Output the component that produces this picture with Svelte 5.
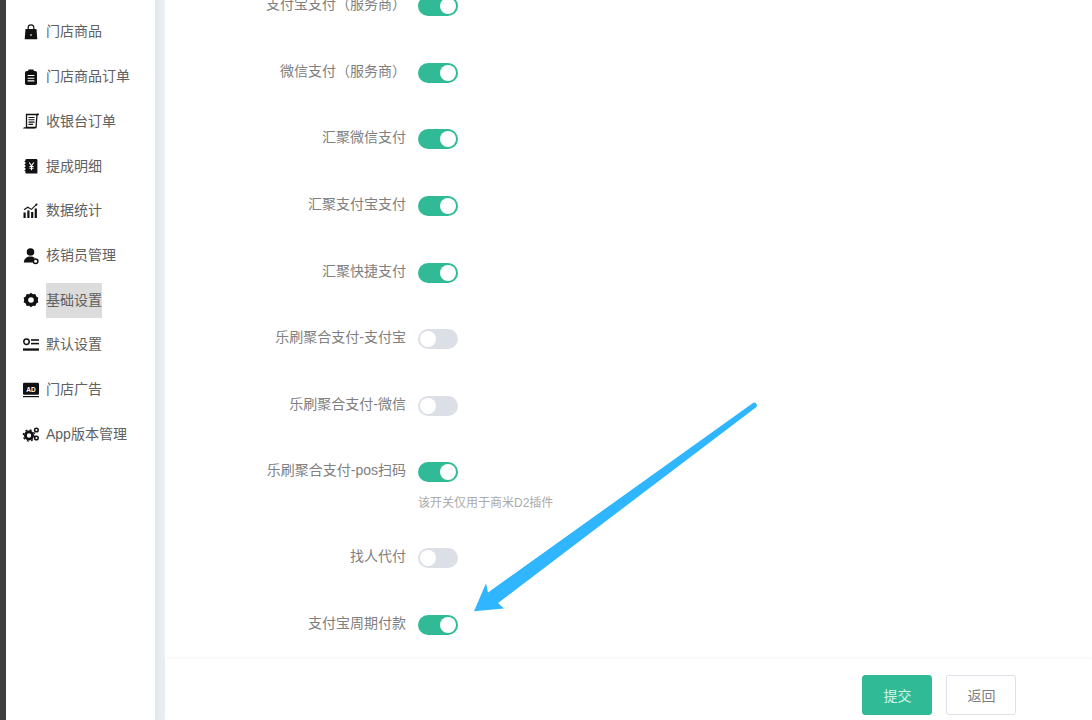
<script>
  const menu = [
    { name: '门店商品', icon: 'bag' },
    { name: '门店商品订单', icon: 'clip' },
    { name: '收银台订单', icon: 'scroll' },
    { name: '提成明细', icon: 'yen' },
    { name: '数据统计', icon: 'chart' },
    { name: '核销员管理', icon: 'user' },
    { name: '基础设置', icon: 'gear', active: true },
    { name: '默认设置', icon: 'list' },
    { name: '门店广告', icon: 'ad' },
    { name: 'App版本管理', icon: 'gears' }
  ];
  const rows = [
    { label: '支付宝支付（服务商）', on: true, wide: true },
    { label: '微信支付（服务商）', on: true, wide: true },
    { label: '汇聚微信支付', on: true },
    { label: '汇聚支付宝支付', on: true },
    { label: '汇聚快捷支付', on: true },
    { label: '乐刷聚合支付-支付宝', on: false },
    { label: '乐刷聚合支付-微信', on: false },
    { label: '乐刷聚合支付-pos扫码', on: true, hint: '该开关仅用于商米D2插件' },
    { label: '找人代付', on: false },
    { label: '支付宝周期付款', on: true }
  ];
</script>

<div class="page">
  <div class="rail"></div>
  <nav class="side">
    {#each menu as m}
      <div class="item">
        <svg class="ico" viewBox="0 0 18 18" width="18" height="18" fill="#111">
          {#if m.icon === 'bag'}
            <path d="M3.5 6h11l.8 10.2H2.7z" />
            <path d="M6.2 7V4.6a2.8 2.8 0 0 1 5.6 0V7" fill="none" stroke="#111" stroke-width="1.2" />
            <rect x="8" y="11.5" width="2" height="1" fill="#fff" />
          {:else if m.icon === 'clip'}
            <rect x="3" y="3" width="12" height="14" rx="1.8" />
            <rect x="6.3" y="1.5" width="5.4" height="3" rx=".8" />
            <path d="M5.6 7.5h6.8M5.6 10.2h6.8M5.6 12.9h6.8" stroke="#fff" stroke-width="1.1" />
          {:else if m.icon === 'scroll'}
            <path d="M4.5 2.5h10.5L14 15.5H4.5z" fill="none" stroke="#111" stroke-width="1.3" />
            <path d="M6.5 5.5h6M6.5 7.8h6M6.5 10.1h6M6.5 12.4h4.5" stroke="#111" stroke-width="1.1" />
            <path d="M1 16.6h12v-1.4H2z" />
            <rect x="15" y="1.5" width="1.8" height="1.8" />
          {:else if m.icon === 'yen'}
            <rect x="3.4" y="2" width="12" height="14.6" rx="1.2" />
            <path d="M2.6 4.5h2M2.6 7.5h2M2.6 10.5h2M2.6 13.5h2" stroke="#111" stroke-width="1.1" />
            <path d="M7.2 5.5l2.3 3.2 2.3-3.2M9.5 8.7v4.6M7.4 9.5h4.2M7.4 11.2h4.2" fill="none" stroke="#fff" stroke-width="1.1" />
          {:else if m.icon === 'chart'}
            <rect x="1.5" y="10.5" width="2.2" height="5.5" />
            <rect x="5.3" y="8.5" width="2.2" height="7.5" />
            <rect x="9.1" y="10" width="2.2" height="6" />
            <rect x="12.7" y="6.5" width="2.2" height="9.5" />
            <path d="M2 7.8l3.8-2.6 3.6 2.2 4.6-4.6" fill="none" stroke="#111" stroke-width="1.1" />
            <circle cx="14.4" cy="2.6" r="1.1" />
          {:else if m.icon === 'user'}
            <circle cx="8.5" cy="5" r="3.8" />
            <path d="M1.8 15.4c.3-3.8 3.2-5.8 6.7-5.8 1.7 0 3 .4 4 1.1l-1.8 4.7z" />
            <circle cx="13.6" cy="14.2" r="2.3" fill="none" stroke="#111" stroke-width="1.5" />
          {:else if m.icon === 'gear'}
            <path d="M9 1.8l1.9 1.5 2.4-.2 1 2.3 2 1.4-.5 2.2.5 2.2-2 1.4-1 2.3-2.4-.2L9 16.2l-1.9-1.5-2.4.2-1-2.3-2-1.4.5-2.2-.5-2.2 2-1.4 1-2.3 2.4.2z" />
            <circle cx="9" cy="9" r="2.8" fill="#fff" />
          {:else if m.icon === 'list'}
            <circle cx="4.5" cy="5.8" r="2.7" fill="none" stroke="#111" stroke-width="1.5" />
            <rect x="9" y="3.2" width="8" height="1.6" />
            <rect x="9" y="6.8" width="8" height="1.6" />
            <rect x="1" y="12.4" width="16" height="2.3" />
          {:else if m.icon === 'ad'}
            <rect x="1" y="1.8" width="16" height="12" rx="1.2" />
            <rect x="1" y="15" width="16" height="1.2" />
            <text class="adt" x="9" y="10.6" text-anchor="middle">AD</text>
          {:else}
            <circle cx="7" cy="10.5" r="3.6" fill="none" stroke="#111" stroke-width="2.8" />
            <circle cx="7" cy="10.5" r="5.6" fill="none" stroke="#111" stroke-width="1.4" stroke-dasharray="2 2.4" />
            <circle cx="14.4" cy="5" r="1.8" fill="none" stroke="#111" stroke-width="1.5" />
            <circle cx="14.4" cy="13" r="1.8" fill="none" stroke="#111" stroke-width="1.5" />
          {/if}
        </svg>
        <span class="name" class:active={m.active}>{m.name}</span>
      </div>
    {/each}
  </nav>
  <div class="gutter"></div>
  <main class="main">
    <div class="form">
      {#each rows as r}
        <div class="row">
          <div class="label">{r.label}</div>
          <div class="ctl">
            <div class="sw" class:on={r.on}><i></i></div>
            {#if r.hint}<div class="hint">{r.hint}</div>{/if}
          </div>
        </div>
      {/each}
    </div>
    <footer class="foot">
      <button class="btn primary">提交</button>
      <button class="btn">返回</button>
    </footer>
  </main>
  <svg class="arrow" width="1092" height="720" viewBox="0 0 1092 720">
    <path fill="#2fb6ff" d="M752.6 403.2a2.6 2.6 0 0 1 3.2 4.2L498 603l6 5.4-30 2.8 12-28 2 9.4z" />
  </svg>
</div>

<style>
  :global(body) { margin: 0; background: #fff; }
  .page {
    position: relative;
    display: flex;
    width: 1092px;
    height: 720px;
    overflow: hidden;
    font-family: "Liberation Sans", "Noto Sans CJK SC", sans-serif;
    font-size: 14px;
  }
  .rail { width: 6px; flex: none; background: #3e3e3e; }
  .side { width: 149px; flex: none; padding-top: 9.6px; background: #fff; box-sizing: border-box; }
  .item { display: flex; align-items: center; height: 44.72px; padding-left: 16px; box-sizing: border-box; }
  .ico { flex: none; margin-right: 6px; }
  .adt { font: bold 6.5px "Liberation Sans", sans-serif; fill: #fff; }
  .name { color: #606060; line-height: 35px; display: block; }
  .name.active { background: #dcdcdc; }
  .gutter { width: 10px; flex: none; background: linear-gradient(90deg, #e2e6ea, #eef0f3); }
  .main { flex: 1; min-width: 0; display: flex; flex-direction: column; background: #fff; }
  .form { flex: 1; min-height: 0; overflow: hidden; }
  .row { display: flex; margin-top: 0; padding-bottom: 46.65px; }
  .row:first-child { margin-top: -4px; }
  .label {
    width: 241px;
    flex: none;
    text-align: right;
    color: #808080;
    line-height: 20px;
    margin-top: -2px;
    white-space: nowrap;
  }
  .ctl { margin-left: 12px; }
  .sw {
    position: relative;
    width: 40px;
    height: 20px;
    border-radius: 10px;
    background: #dcdfe6;
  }
  .sw.on { background: #30bb96; }
  .sw i {
    position: absolute;
    top: 2px;
    left: 2px;
    width: 16px;
    height: 16px;
    border-radius: 50%;
    background: #fff;
  }
  .sw.on i { left: 22px; }
  .hint {
    margin: 12px 0 -11.2px;
    font-size: 12px;
    line-height: 18px;
    color: #aaa;
    white-space: nowrap;
  }
  .foot {
    flex: none;
    height: 61px;
    box-sizing: border-box;
    display: flex;
    gap: 14px;
    padding: 16px 0 0 697.4px;
    background: #fff;
    box-shadow: 0 -1px 3px rgba(0, 0, 0, .05);
    position: relative;
  }
  .btn {
    width: 70px;
    height: 40px;
    padding: 0;
    box-sizing: border-box;
    border: 1px solid #dfe1e8;
    border-radius: 3px;
    background: #fff;
    color: #808080;
    font: inherit;
    font-size: 14px;
  }
  .btn.primary { background: #30bb96; border-color: #30bb96; color: #d6f3ea; }
  .arrow { position: absolute; left: 0; top: 0; pointer-events: none; }
</style>
